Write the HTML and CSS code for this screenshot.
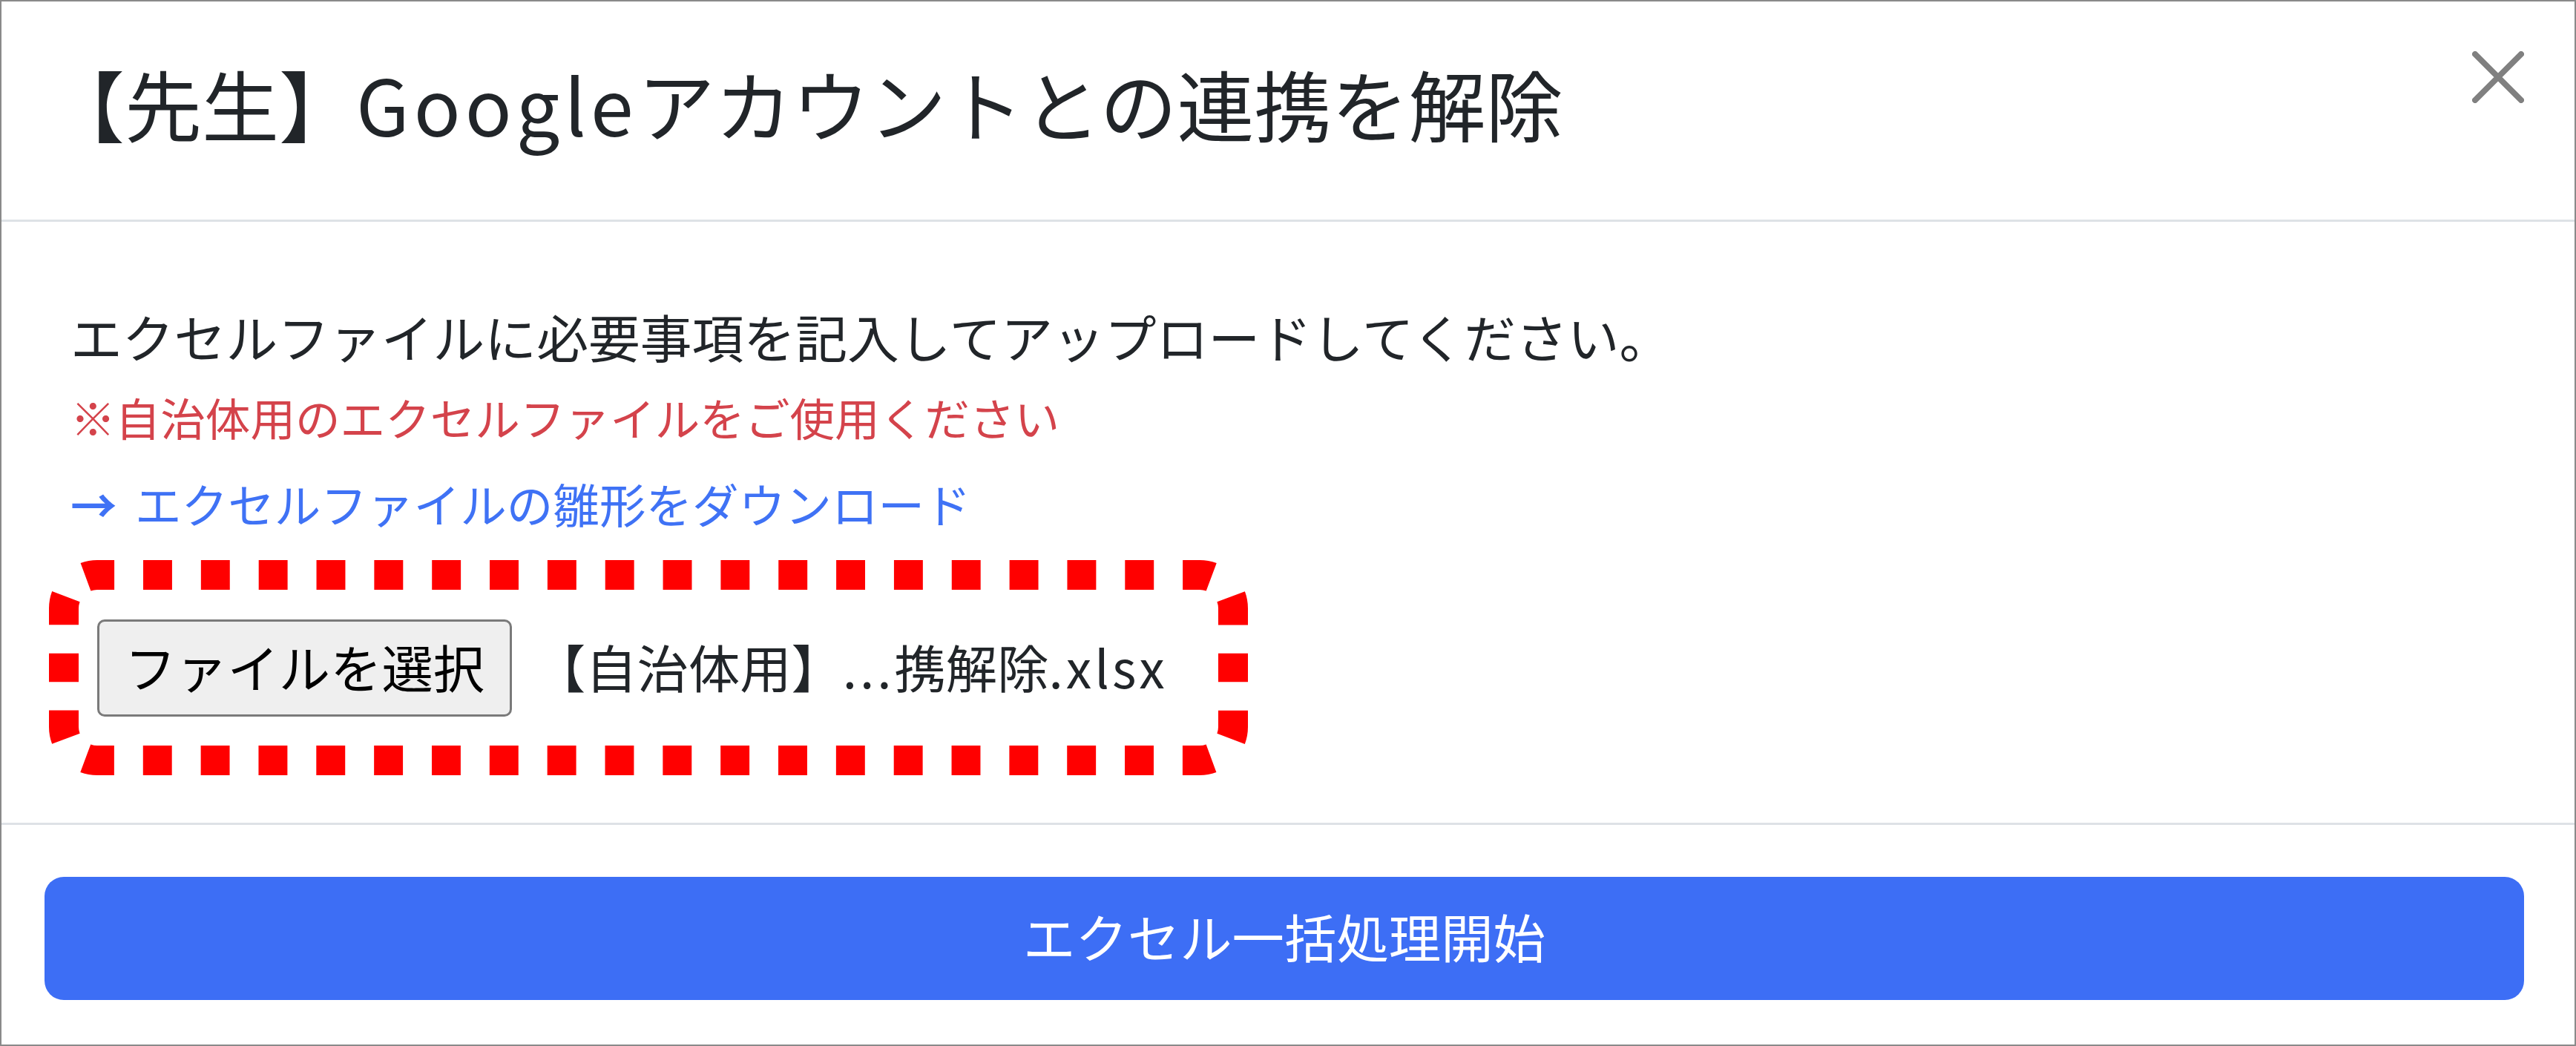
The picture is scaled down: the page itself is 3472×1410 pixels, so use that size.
FILE: index.html
```html
<!DOCTYPE html>
<html lang="ja">
<head>
<meta charset="utf-8">
<title>Googleアカウントとの連携を解除</title>
<link rel="stylesheet" href="styles.css">
</head>
<body>
<div class="modal">
  <header class="modal-header">
    <h1 class="modal-title">【先生】<span class="latin">Google</span>アカウントとの連携を解除</h1>
    <button class="close" type="button" aria-label="閉じる">
      <svg width="70" height="70" viewBox="0 0 70 70"><path d="M4 4 L66 66 M66 4 L4 66" stroke="#808080" stroke-width="8" stroke-linecap="round" fill="none"/></svg>
    </button>
  </header>
  <section class="modal-body">
    <p class="lead">エクセルファイルに必要事項を記入してアップロードしてください。</p>
    <p class="note">※自治体用のエクセルファイルをご使用ください</p>
    <p class="dl"><a class="dl-link" href="#"><span class="arrow">→</span>エクセルファイルの雛形をダウンロード</a></p>
    <div class="file-row">
      <span class="file-btn">ファイルを選択</span>
      <span class="file-name">【自治体用】<span class="latin-s">...</span>携解除<span class="latin-s">.xlsx</span></span>
      <svg class="annot" width="1616" height="290" viewBox="0 0 1616 290">
        <g fill="none" stroke="#ff0000" stroke-width="40">
          <path d="M33.18 33.18 A45 45 0 0 1 65 20 L1551 20 A45 45 0 0 1 1582.82 33.18" stroke-dasharray="38.92 38.92" stroke-dashoffset="58.38"/>
          <path d="M1582.82 33.18 A45 45 0 0 1 1596 65 L1596 225 A45 45 0 0 1 1582.82 256.82" stroke-dasharray="38.45 38.45" stroke-dashoffset="57.68"/>
          <path d="M1582.82 256.82 A45 45 0 0 1 1551 270 L65 270 A45 45 0 0 1 33.18 256.82" stroke-dasharray="38.92 38.92" stroke-dashoffset="58.38"/>
          <path d="M33.18 256.82 A45 45 0 0 1 20 225 L20 65 A45 45 0 0 1 33.18 33.18" stroke-dasharray="38.45 38.45" stroke-dashoffset="57.68"/>
        </g>
      </svg>
    </div>
  </section>
  <footer class="modal-footer">
    <button class="submit" type="button">エクセル一括処理開始</button>
  </footer>
</div>
</body>
</html>
```

FILE: styles.css
```css
html, body {
  margin: 0;
  padding: 0;
  background: #ffffff;
}

body {
  font-family: "Noto Sans CJK JP", "Noto Sans", sans-serif;
  color: #212529;
}

.modal {
  box-sizing: border-box;
  width: 3472px;
  height: 1410px;
  border: 2px solid #8a8a8a;
  display: flex;
  flex-direction: column;
  background: #ffffff;
}

.modal-header {
  box-sizing: border-box;
  height: 297px;
  flex: none;
  border-bottom: 3px solid #dee2e6;
  padding: 59px 68px 0 62px;
  display: flex;
  justify-content: space-between;
  align-items: flex-start;
}

.modal-title {
  margin: 0;
  font-size: 104px;
  font-weight: 400;
  line-height: 156px;
  color: #212529;
}

.latin {
  letter-spacing: 6px;
}

.close {
  margin-top: 8px;
  width: 70px;
  height: 70px;
  padding: 0;
  border: 0;
  background: none;
  display: block;
}

.close svg {
  display: block;
}

.modal-body {
  box-sizing: border-box;
  height: 813px;
  flex: none;
  border-bottom: 3px solid #dee2e6;
  padding: 102px 0 0 93px;
}

.lead {
  margin: 0;
  font-size: 69.8px;
  line-height: 104px;
}

.note {
  margin: 11px 0 0;
  font-size: 60.6px;
  line-height: 91px;
  color: #d4434b;
}

.dl {
  margin: 25px 0 0;
  font-size: 62.6px;
  line-height: 91px;
}

.dl-link {
  color: #3f72f5;
  text-decoration: none;
}

.arrow {
  display: inline-block;
  width: 87px;
  font-weight: 700;
}

.file-row {
  position: relative;
  margin: 112px 0 0 36px;
  display: flex;
  align-items: center;
  width: max-content;
}

.file-btn {
  box-sizing: border-box;
  width: 559px;
  height: 131px;
  border: 3px solid #7a7a7a;
  border-radius: 10px;
  background: #efefef;
  color: #000000;
  font-size: 69.3px;
  display: flex;
  align-items: center;
  justify-content: center;
  padding-bottom: 6px;
}

.file-name {
  margin-left: 30px;
  font-size: 69.3px;
  line-height: 104px;
  padding-bottom: 6px;
  color: #212529;
}

.latin-s {
  letter-spacing: 4px;
}

.annot {
  position: absolute;
  left: -65px;
  top: -80px;
}

.modal-footer {
  flex: 1;
  padding: 70px 68px 0 58px;
}

.submit {
  display: block;
  width: 100%;
  height: 166px;
  border: 0;
  border-radius: 26px;
  background: #3d6ef5;
  color: #ffffff;
  font-family: "Noto Sans CJK JP", "Noto Sans", sans-serif;
  font-size: 70.4px;
  padding: 0 0 8px;
}
```
